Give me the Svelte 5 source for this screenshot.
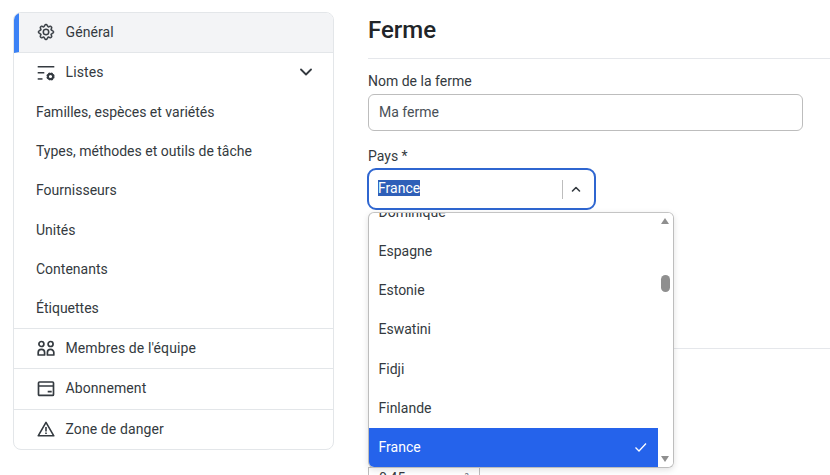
<script>
	const lists = [
		"Familles, espèces et variétés",
		"Types, méthodes et outils de tâche",
		"Fournisseurs",
		"Unités",
		"Contenants",
		"Étiquettes",
	];
	const countries = ["Dominique", "Espagne", "Estonie", "Eswatini", "Fidji", "Finlande"];
</script>

<div class="page">
	<nav class="menu">
		<a class="row active" href="#general">
			<svg class="gear" viewBox="-1 -1 18 18" width="18" height="18"><path d="M8 4.754a3.246 3.246 0 1 0 0 6.492 3.246 3.246 0 0 0 0-6.492zM5.754 8a2.246 2.246 0 1 1 4.492 0 2.246 2.246 0 0 1-4.492 0z" /><path d="M9.796 1.343c-.527-1.79-3.065-1.79-3.592 0l-.094.319a.873.873 0 0 1-1.255.52l-.292-.16c-1.64-.892-3.433.902-2.54 2.541l.159.292a.873.873 0 0 1-.52 1.255l-.319.094c-1.79.527-1.79 3.065 0 3.592l.319.094a.873.873 0 0 1 .52 1.255l-.16.292c-.892 1.64.901 3.434 2.541 2.54l.292-.159a.873.873 0 0 1 1.255.52l.094.319c.527 1.79 3.065 1.79 3.592 0l.094-.319a.873.873 0 0 1 1.255-.52l.292.16c1.64.893 3.434-.902 2.54-2.541l-.159-.292a.873.873 0 0 1 .52-1.255l.319-.094c1.79-.527 1.79-3.065 0-3.592l-.319-.094a.873.873 0 0 1-.52-1.255l.16-.292c.893-1.64-.902-3.433-2.541-2.54l-.292.159a.873.873 0 0 1-1.255-.52l-.094-.319zm-2.633.283c.246-.835 1.428-.835 1.674 0l.094.319a1.873 1.873 0 0 0 2.693 1.115l.291-.16c.764-.415 1.6.42 1.184 1.185l-.159.292a1.873 1.873 0 0 0 1.116 2.692l.318.094c.835.246.835 1.428 0 1.674l-.319.094a1.873 1.873 0 0 0-1.115 2.693l.16.291c.415.764-.42 1.6-1.185 1.184l-.291-.159a1.873 1.873 0 0 0-2.693 1.116l-.094.318c-.246.835-1.428.835-1.674 0l-.094-.319a1.873 1.873 0 0 0-2.692-1.115l-.292.16c-.764.415-1.6-.42-1.184-1.185l.159-.291A1.873 1.873 0 0 0 1.945 8.93l-.319-.094c-.835-.246-.835-1.428 0-1.674l.319-.094A1.873 1.873 0 0 0 3.06 4.377l-.16-.292c-.415-.764.42-1.6 1.185-1.184l.292.159a1.873 1.873 0 0 0 2.692-1.115l.094-.319z" /></svg>
			<span>Général</span>
		</a>
		<div class="row group">
			<svg viewBox="0 0 18 18" width="18" height="18">
				<rect x="0.7" y="3" width="16.6" height="1.5" />
				<rect x="0.7" y="9" width="6.6" height="1.5" />
				<rect x="0.7" y="15.2" width="4.8" height="1.5" />
				<circle cx="13.5" cy="13.5" r="3" fill="none" stroke="currentColor" stroke-width="2.2" stroke-dasharray="1.7 0.65" />
				<circle cx="13.5" cy="13.5" r="2.5" fill="none" stroke="currentColor" stroke-width="1.8" />
			</svg>
			<span>Listes</span>
			<svg class="chev" viewBox="0 0 12 12" width="12" height="12"><path d="M1 3.5 6 8.5l5-5" fill="none" stroke="currentColor" stroke-width="1.8" stroke-linecap="round" stroke-linejoin="round" /></svg>
		</div>
		<div class="sublist">
			{#each lists as item}
				<a class="sub" href="#list">{item}</a>
			{/each}
		</div>
		<a class="row line" href="#team">
			<svg viewBox="0 0 18 18" width="18" height="18" fill="none" stroke="currentColor" stroke-width="1.7">
				<circle cx="4.4" cy="5" r="2.5" />
				<circle cx="13.6" cy="5" r="2.5" />
				<path d="M1.2 16v-2.4a3.2 3.2 0 0 1 6.4 0V16z" stroke-linejoin="round" />
				<path d="M10.4 16v-2.4a3.2 3.2 0 0 1 6.4 0V16z" stroke-linejoin="round" />
			</svg>
			<span>Membres de l'équipe</span>
		</a>
		<a class="row line" href="#sub">
			<svg viewBox="0 0 18 18" width="18" height="18" fill="none" stroke="currentColor" stroke-width="1.7">
				<rect x="1.5" y="3" width="15" height="13.4" rx="1" />
				<path d="M1.5 7h15" />
				<path d="M10.7 12.7h4" />
			</svg>
			<span>Abonnement</span>
		</a>
		<a class="row line" href="#danger">
			<svg viewBox="0 0 18 18" width="18" height="18" fill="none" stroke="currentColor" stroke-width="1.6">
				<path d="M9 2.4 16.8 15.8H1.2z" stroke-linejoin="round" />
				<path d="M9 7v4.4" />
				<path d="M9 12.4v1.5" />
			</svg>
			<span>Zone de danger</span>
		</a>
	</nav>

	<main class="content">
		<h1>Ferme</h1>
		<div class="field">
			<label for="farm">Nom de la ferme</label>
			<input id="farm" value="Ma ferme" />
		</div>
		<div class="field country">
			<span class="label">Pays *</span>
			<div class="select">
				<span class="value"><mark>France</mark></span>
				<i class="sep"></i>
				<svg viewBox="0 0 12 12" width="12" height="12"><path d="M2.5 8 6 4.5 9.5 8" fill="none" stroke="currentColor" stroke-width="1.6" stroke-linecap="round" stroke-linejoin="round" /></svg>
			</div>
			<div class="dropdown">
				<div class="options">
					{#each countries as c}
						<div class="opt">{c}</div>
					{/each}
					<div class="opt selected">
						France
						<svg viewBox="0 0 16 16" width="16" height="16"><path d="M2.5 8.5 6 12l7-7.5" fill="none" stroke="currentColor" stroke-width="1.3" /></svg>
					</div>
				</div>
				<div class="scroll">
					<b class="up"></b>
					<b class="thumb"></b>
					<b class="down"></b>
				</div>
			</div>
		</div>
		<hr />
		<div class="area">
			<span>0,45</span>
			<span class="unit">m²</span>
		</div>
	</main>
</div>

<style>
	:global(body) {
		margin: 0;
		background: #fff;
	}
	.page {
		height: 475px;
		overflow: hidden;
		display: flex;
		align-items: flex-start;
		font-family: Roboto, "Liberation Sans", sans-serif;
		font-size: 14px;
		color: #343a40;
	}
	.menu {
		width: 319px;
		margin: 12px 0 0 13px;
		flex: none;
		border: 1px solid #e3e6e9;
		border-radius: 8px;
		overflow: hidden;
		display: flex;
		flex-direction: column;
	}
	a {
		color: inherit;
		text-decoration: none;
	}
	.row {
		height: 39px;
		padding: 0 21px 2px 23px;
		display: flex;
		align-items: center;
		gap: 10.5px;
		box-sizing: border-box;
	}
	.row span {
		letter-spacing: 0.1px;
	}
	.row svg {
		fill: currentColor;
		flex: none;
	}
	.row svg[fill="none"] {
		fill: none;
	}
	.gear path {
		stroke: currentColor;
		stroke-width: 0.5;
	}
	.active {
		height: 40px;
		background: #f3f4f6;
		border-left: 5px solid #3b82f6;
		border-bottom: 1px solid #e3e6e9;
		padding-left: 18px;
	}
	.group {
		height: 40px;
	}
	.group .chev {
		margin-left: auto;
		fill: none;
	}
	.sublist {
		display: flex;
		flex-direction: column;
	}
	.sub {
		height: 39.1px;
		box-sizing: border-box;
		padding: 0 0 0.5px 22px;
		display: flex;
		align-items: center;
	}
	.line {
		height: 40.5px;
		padding-bottom: 1px;
		border-top: 1px solid #e3e6e9;
	}
	.content {
		flex: 1;
		margin-left: 34px;
		min-width: 0;
	}
	h1 {
		margin: 0;
		height: 59px;
		box-sizing: border-box;
		padding-top: 15px;
		font-size: 24px;
		line-height: 30px;
		font-weight: 500;
		color: #212529;
		border-bottom: 1px solid #e5e7eb;
	}
	.field {
		display: flex;
		flex-direction: column;
		margin-top: 14px;
	}
	label,
	.label {
		line-height: 17px;
		margin-bottom: 4px;
	}
	input {
		width: 435px;
		height: 37px;
		box-sizing: border-box;
		padding: 0 10px 2px;
		border: 1px solid #bdbdbd;
		border-radius: 6px;
		font: inherit;
		color: #495057;
		outline: none;
	}
	.country {
		margin-top: 17px;
		position: relative;
	}
	.select {
		width: 229px;
		height: 42px;
		margin-left: -1px;
		margin-top: -1px;
		box-sizing: border-box;
		border: 2px solid #2f66d0;
		border-radius: 9px;
		display: flex;
		align-items: center;
		padding: 0 12px 2px 9px;
		color: #343a40;
	}
	.select svg {
		margin-top: 2px;
	}
	.value {
		flex: 1;
	}
	mark {
		background: #2f5fb8;
		color: #fff;
	}
	.sep {
		width: 1px;
		height: 19px;
		margin-top: 2px;
		background: #bdbdbd;
		margin-right: 7px;
	}
	.dropdown {
		position: absolute;
		top: 64px;
		left: 0;
		width: 306px;
		height: 256px;
		box-sizing: border-box;
		background: #fff;
		border: 1px solid #bdbdbd;
		border-top-color: #c4c4c4;
		border-radius: 6px;
		box-shadow: 0 2px 6px rgba(0, 0, 0, 0.12);
		overflow: hidden;
		display: flex;
		z-index: 2;
	}
	.options {
		flex: 1;
		min-width: 0;
		display: flex;
		flex-direction: column;
		justify-content: flex-end;
	}
	.opt {
		height: 39.3px;
		flex: none;
		box-sizing: border-box;
		padding: 0 10px 0 9.5px;
		display: flex;
		align-items: center;
		justify-content: space-between;
	}
	.opt.selected {
		background: #2563eb;
		color: #fff;
		padding-right: 9px;
	}
	.scroll {
		width: 15px;
		flex: none;
		position: relative;
		background: #fff;
	}
	.scroll b {
		position: absolute;
		left: 3px;
	}
	.up,
	.down {
		width: 0;
		height: 0;
		border-left: 4.5px solid transparent;
		border-right: 4.5px solid transparent;
	}
	.up {
		top: 5px;
		border-bottom: 6px solid #8f8f8f;
	}
	.down {
		bottom: 5px;
		border-top: 6px solid #8f8f8f;
	}
	.thumb {
		top: 62px;
		width: 9px;
		height: 17px;
		border-radius: 5px;
		background: #8f8f8f;
	}
	hr {
		margin: 138px 0 0;
		border: 0;
		border-top: 1px solid #e5e7eb;
	}
	.area {
		margin-top: 118px;
		width: 112px;
		height: 30px;
		box-sizing: border-box;
		border: 1px solid #bdbdbd;
		padding: 0 10px;
		display: flex;
		justify-content: space-between;
		line-height: 20px;
	}
	.unit {
		font-size: 12px;
		color: #6b7280;
	}
</style>
